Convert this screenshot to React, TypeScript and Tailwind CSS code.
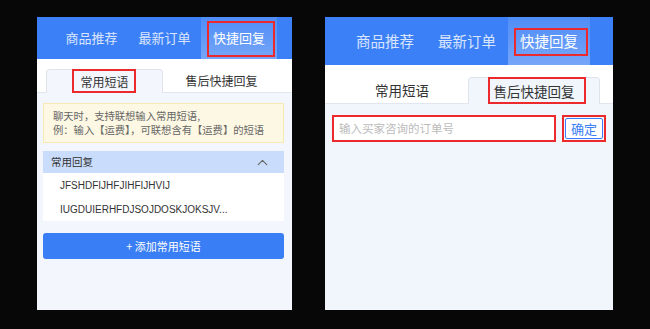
import { ChevronUp } from "lucide-react";

const RED = "border-2 border-[#ec2a2e]";

function LeftPanel() {
  return (
    <div className="w-[255px] h-[293px] bg-[#f3f6fc] flex flex-col">
      {/* top nav */}
      <div className="h-[42px] bg-[#3b80f6] flex pl-[18px]">
        <div className="w-[73px] flex items-center justify-center text-[13px] text-white/80">商品推荐</div>
        <div className="w-[73px] flex items-center justify-center text-[13px] text-white/80">最新订单</div>
        <div className="relative w-[76px] flex items-center justify-center text-[13px] text-white bg-gradient-to-b from-white/10 to-white/30">
          快捷回复
          <div className={`absolute left-[6px] top-[4px] w-[68px] h-[36px] ${RED}`} />
        </div>
      </div>

      {/* sub tabs */}
      <div className="h-[34px] bg-white border-b border-[#e2e6ee] flex items-end pl-[9px]">
        <div className="relative w-[117px] h-[24px] -mb-px bg-[#f3f6fc] border border-b-0 border-[#dfe3ea] rounded-t-[4px] flex items-center justify-center text-[12px] text-[#333]">
          常用短语
          <div className={`absolute left-[25px] -top-px w-[64px] h-[24px] ${RED}`} />
        </div>
        <div className="w-[117px] h-[23px] flex items-center justify-center text-[12px] text-[#333]">售后快捷回复</div>
      </div>

      <div className="pl-[6px] pr-[8px] pt-[10px] flex flex-col">
        <div className="h-[40px] bg-[#fdf8e3] border border-[#f6e9b2] px-[9px] flex flex-col justify-center text-[10.3px] leading-[14px] text-[#666]">
          <span>聊天时，支持联想输入常用短语,</span>
          <span>例：输入【运费】，可联想含有【运费】的短语</span>
        </div>

        <div className="mt-[8px] h-[22px] bg-[#c9dcfb] flex items-center justify-between pl-[8px] pr-[13px] text-[10.5px] text-[#333]">
          <span>常用回复</span>
          <ChevronUp size={17} strokeWidth={1.6} className="text-[#666]" />
        </div>
        <div className="bg-white h-[48px] flex flex-col pl-[17px] font-[family-name:'Liberation_Sans',sans-serif] text-[10px] text-[#333]">
          <div className="h-[24px] flex items-center">JFSHDFIJHFJIHFIJHVIJ</div>
          <div className="h-[24px] flex items-center">IUGDUIERHFDJSOJDOSKJOKSJV...</div>
        </div>

        <div className="mt-[12px] h-[26px] rounded-[3px] bg-[#3a7ef5] flex items-center justify-center text-white text-[11px]">
          + 添加常用短语
        </div>
      </div>
    </div>
  );
}

function RightPanel() {
  return (
    <div className="w-[288px] h-[293px] bg-[#f1f5fc] flex flex-col">
      <div className="h-[48px] bg-[#3b80f6] flex pl-[19px]">
        <div className="w-[82px] flex items-center justify-center text-[14.5px] text-white/80">商品推荐</div>
        <div className="w-[82px] flex items-center justify-center text-[14.5px] text-white/80">最新订单</div>
        <div className="relative w-[82px] flex items-center justify-center text-[14.5px] text-white bg-gradient-to-b from-white/10 to-white/30">
          快捷回复
          <div className={`absolute left-[6px] top-[11px] w-[74px] h-[28px] ${RED}`} />
        </div>
      </div>

      <div className="h-[39px] bg-white border-b border-[#e2e6ee] flex items-end pl-[11px]">
        <div className="w-[132px] h-[26px] flex items-center justify-center text-[13.5px] text-[#333]">常用短语</div>
        <div className="relative w-[132px] h-[27px] -mb-px bg-[#f1f5fc] border border-b-0 border-[#dfe3ea] rounded-t-[4px] flex items-center justify-center text-[13.5px] text-[#333]">
          售后快捷回复
          <div className={`absolute left-[19px] -top-px w-[98px] h-[27px] ${RED}`} />
        </div>
      </div>

      <div className="flex items-center pl-[7px] pt-[11px]">
        <div className={`w-[224px] h-[27px] bg-white ${RED} flex items-center pl-[5px] text-[11.5px] text-[#bbb]`}>
          输入买家咨询的订单号
        </div>
        <div className={`ml-[6px] w-[44px] h-[27px] ${RED} flex items-center justify-center`}>
          <div className="w-[38px] h-[21px] bg-white border border-[#3a7ef5] rounded-[2px] flex items-center justify-center text-[13px] text-[#3a7ef5]">
            确定
          </div>
        </div>
      </div>
    </div>
  );
}

export default function App() {
  return (
    <div className="w-[650px] h-[329px] bg-[#070707] flex gap-[33px] pl-[37px] pt-[17px] font-[family-name:'Noto_Sans_CJK_SC','Noto_Sans',sans-serif]">
      <LeftPanel />
      <RightPanel />
    </div>
  );
}
